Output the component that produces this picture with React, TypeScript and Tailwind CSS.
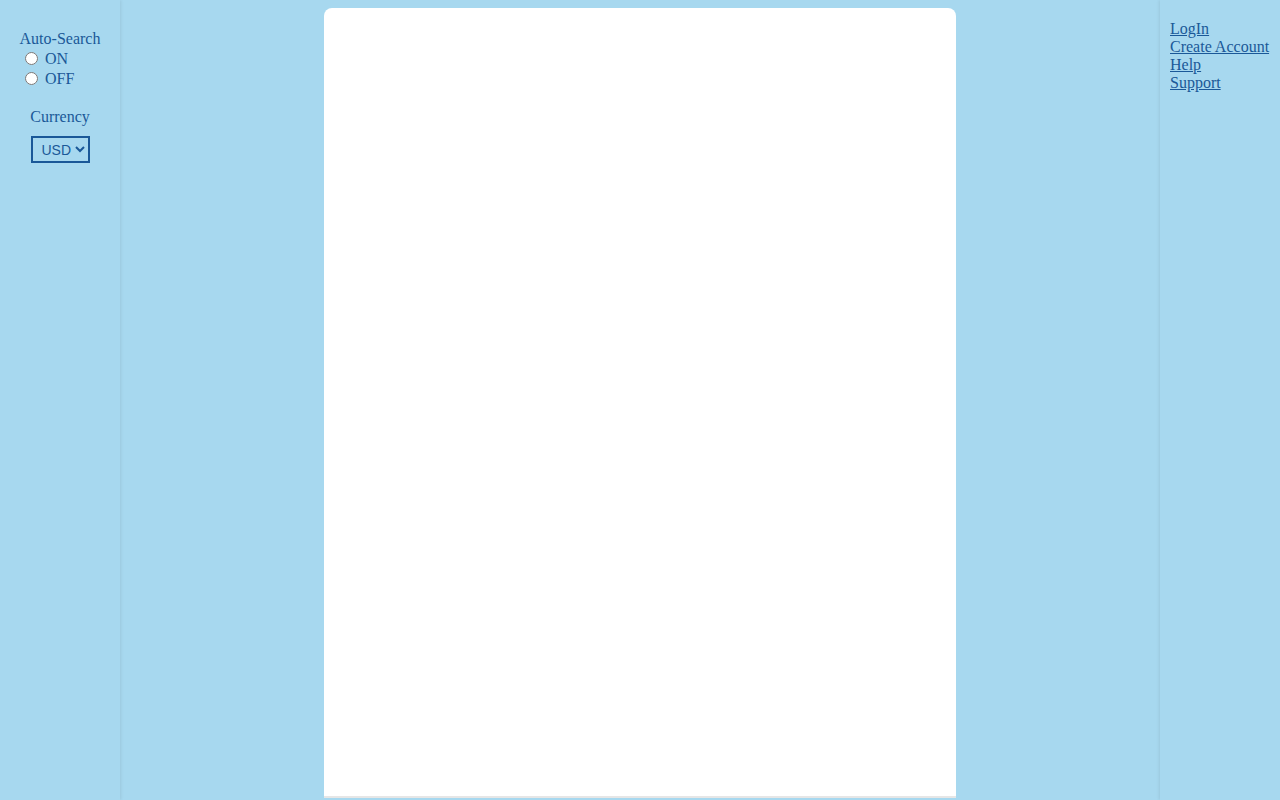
import React, { useState } from 'react';

export default function App() {
  const [auto, setAuto] = useState<string>('');
  const [currency, setCurrency] = useState<string>('USD');

  return (
    <div className="flex h-[800px] w-full overflow-hidden bg-[#a7d8ef] text-[#1a5898] text-base" style={{ fontFamily: '"Liberation Serif", serif' }}>
      {/* Left settings column */}
      <div className="w-[120px] shrink-0 shadow-[1px_0_3px_rgba(0,0,0,0.08)] z-10 pt-[29px] flex flex-col items-center">
        <div className="leading-5">Auto-Search</div>
        <label className="flex items-center gap-[7px] self-start pl-[25px] leading-5">
          <input type="radio" name="auto" className="m-0 w-[13px] h-[13px] -mt-[2px]" checked={auto === 'on'} onChange={() => setAuto('on')} />
          ON
        </label>
        <label className="flex items-center gap-[7px] self-start pl-[25px] leading-5">
          <input type="radio" name="auto" className="m-0 w-[13px] h-[13px] -mt-[2px]" checked={auto === 'off'} onChange={() => setAuto('off')} />
          OFF
        </label>
        <div className="mt-[18px] leading-5">Currency</div>
        <select
          value={currency}
          onChange={(e) => setCurrency(e.target.value)}
          className="mt-[9px] w-[59px] h-[27px] border-2 border-[#1a5898] bg-[#a7d8ef] text-[14px] text-[#1a5898] pl-[5px]"
          style={{ fontFamily: '"Liberation Sans", Arial, sans-serif' }}
        >
          <option>USD</option>
          <option>EUR</option>
          <option>GBP</option>
        </select>
      </div>

      {/* Main */}
      <div className="flex-1 flex justify-center pt-2">
        <div className="w-[632px] h-[790px] bg-white rounded-t-lg border-b-2 border-[#e6e6e6]"></div>
      </div>

      {/* Right links */}
      <div className="w-[120px] shrink-0 shadow-[-1px_0_3px_rgba(0,0,0,0.08)] z-10 pt-[20px] pl-[10px] flex flex-col leading-[18px] whitespace-nowrap">
        <a href="#" className="underline">LogIn</a>
        <a href="#" className="underline">Create Account</a>
        <a href="#" className="underline">Help</a>
        <a href="#" className="underline">Support</a>
      </div>
    </div>
  );
}
